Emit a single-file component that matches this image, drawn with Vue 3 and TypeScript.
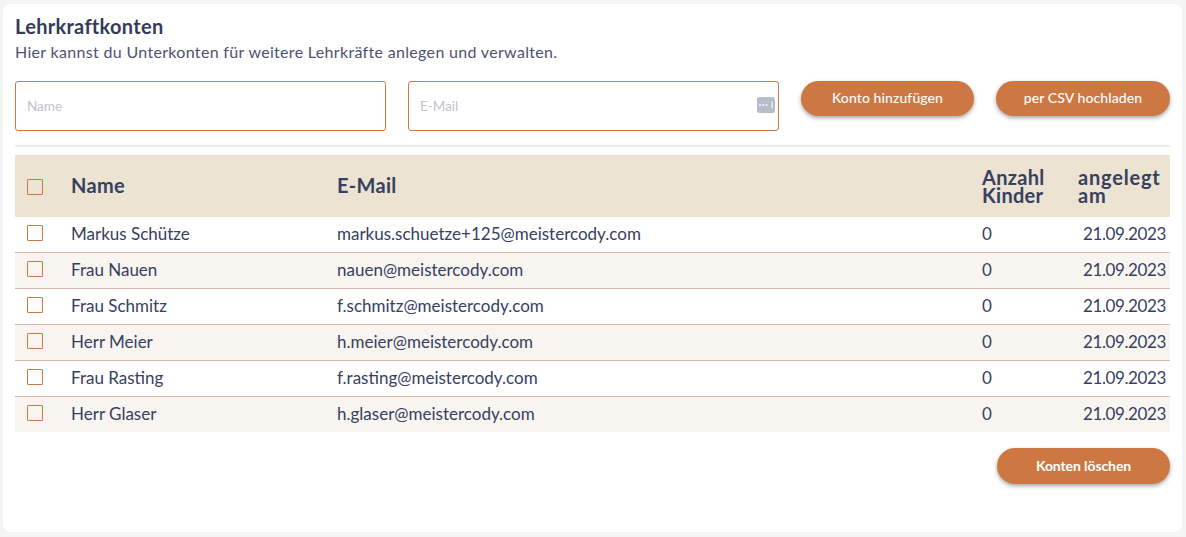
<script setup lang="ts">
interface Account {
  name: string;
  email: string;
  children: number;
  created: string;
}

const accounts: Account[] = [
  { name: 'Markus Schütze', email: 'markus.schuetze+125@meistercody.com', children: 0, created: '21.09.2023' },
  { name: 'Frau Nauen', email: 'nauen@meistercody.com', children: 0, created: '21.09.2023' },
  { name: 'Frau Schmitz', email: 'f.schmitz@meistercody.com', children: 0, created: '21.09.2023' },
  { name: 'Herr Meier', email: 'h.meier@meistercody.com', children: 0, created: '21.09.2023' },
  { name: 'Frau Rasting', email: 'f.rasting@meistercody.com', children: 0, created: '21.09.2023' },
  { name: 'Herr Glaser', email: 'h.glaser@meistercody.com', children: 0, created: '21.09.2023' },
];
</script>

<template>
  <main class="page">
    <section class="card">
      <h2 class="title">Lehrkraftkonten</h2>
      <p class="intro">Hier kannst du Unterkonten für weitere Lehrkräfte anlegen und verwalten.</p>

      <form class="add-form" @submit.prevent>
        <div class="field">
          <input type="text" placeholder="Name" />
        </div>
        <div class="field">
          <input type="text" placeholder="E-Mail" />
          <svg class="key-icon" width="18" height="16" viewBox="0 0 18 16">
            <rect width="18" height="16" rx="2.5" fill="#b9bcca" />
            <circle cx="3" cy="8" r="0.9" fill="#fff" />
            <circle cx="6.3" cy="8" r="0.9" fill="#fff" />
            <circle cx="9.6" cy="8" r="0.9" fill="#fff" />
            <rect x="14.5" y="4.5" width="1" height="7" fill="#fff" />
          </svg>
        </div>
        <button type="button" class="btn">Konto hinzufügen</button>
        <button type="button" class="btn btn-csv">per CSV hochladen</button>
      </form>

      <hr class="divider" />

      <table class="accounts">
        <colgroup>
          <col class="col-check" />
          <col class="col-name" />
          <col class="col-email" />
          <col class="col-count" />
          <col class="col-date" />
        </colgroup>
        <thead>
          <tr>
            <th><span class="check check-all"></span></th>
            <th class="single-line">Name</th>
            <th class="single-line">E-Mail</th>
            <th>Anzahl Kinder</th>
            <th class="created-head">angelegt am</th>
          </tr>
        </thead>
        <tbody>
          <tr v-for="account in accounts" :key="account.email">
            <td><span class="check"></span></td>
            <td>{{ account.name }}</td>
            <td>{{ account.email }}</td>
            <td>{{ account.children }}</td>
            <td class="date">{{ account.created }}</td>
          </tr>
        </tbody>
      </table>

      <div class="actions">
        <button type="button" class="btn btn-delete">Konten löschen</button>
      </div>
    </section>
  </main>
</template>

<style>
html,
body {
  margin: 0;
  background: #f4f4f4;
}
</style>

<style scoped>
.page {
  box-sizing: border-box;
  height: 537px;
  padding: 4px 4px 5px 3px;
  font-family: Lato, "Open Sans", sans-serif;
  color: #37405f;
}

.card {
  box-sizing: border-box;
  height: 528px;
  padding: 12px 12px 0;
  background: #fff;
  border-radius: 8px;
}

.title {
  margin: 0;
  font-size: 20px;
  line-height: 20px;
  font-weight: 700;
  letter-spacing: 0.3px;
  color: #343b5a;
}

.intro {
  margin: 6px 0 0;
  font-size: 16px;
  line-height: 20px;
  letter-spacing: 0.32px;
  color: #4d5270;
}

.add-form {
  display: flex;
  gap: 22px;
  margin-top: 19px;
  align-items: flex-start;
}

.field {
  position: relative;
  width: 371px;
  height: 50px;
}

.field input {
  box-sizing: border-box;
  width: 100%;
  height: 100%;
  padding: 0 11px;
  border: 1px solid #cd7843;
  border-radius: 3px;
  background: #fff;
  font-family: inherit;
  font-size: 13.5px;
  outline: none;
}

.field input::placeholder {
  color: #bfc3cf;
  opacity: 1;
}

.key-icon {
  position: absolute;
  right: 4px;
  top: 16px;
}

.btn {
  flex: none;
  width: 173px;
  height: 35px;
  padding: 0 0 2px;
  border: none;
  border-radius: 18px;
  background: #cd7843;
  box-shadow: 0 2px 4px rgba(0, 0, 0, 0.35);
  color: #fff;
  font-family: inherit;
  font-size: 14px;
  font-weight: 500;
  letter-spacing: 0.1px;
  cursor: pointer;
}

.btn-csv {
  width: 174px;
}

.divider {
  height: 2px;
  margin: 14px 0 8px;
  border: none;
  background: #ececec;
}

.accounts {
  width: 1155px;
  table-layout: fixed;
  border-collapse: separate;
  border-spacing: 0;
  font-size: 17px;
}

.col-check {
  width: 51px;
}

.col-name {
  width: 266px;
}

.col-email {
  width: 645px;
}

.col-count {
  width: 96px;
}

.col-date {
  width: 97px;
}

.accounts th {
  box-sizing: border-box;
  height: 62px;
  padding: 0 5px;
  background: #ece3d3;
  font-size: 20px;
  line-height: 18px;
  font-weight: 700;
  letter-spacing: 0.3px;
  text-align: left;
  color: #37405f;
}

.accounts .single-line {
  padding-bottom: 2px;
}

.accounts .created-head {
  letter-spacing: 0.8px;
}

.accounts td {
  box-sizing: border-box;
  height: 36px;
  padding: 0 5px 2px;
  border-bottom: 1px solid #d8b8a6;
}

.accounts tbody tr:nth-child(even) td {
  background: #f8f4f0;
}

.accounts tbody tr:last-child td {
  height: 35px;
  border-bottom: none;
}

.accounts .date {
  padding: 0 4px 2px 10px;
  letter-spacing: -0.4px;
}

.check {
  display: block;
  box-sizing: border-box;
  width: 16px;
  height: 16px;
  margin: 0 0 1px 7px;
  border: 1px solid #cd7843;
  border-radius: 1px;
}

.check-all {
  margin: 2px 0 0 7px;
}

.actions {
  display: flex;
  justify-content: flex-end;
  margin-top: 16px;
}

.btn-delete {
  height: 36px;
  font-weight: 700;
  letter-spacing: -0.1px;
}
</style>
